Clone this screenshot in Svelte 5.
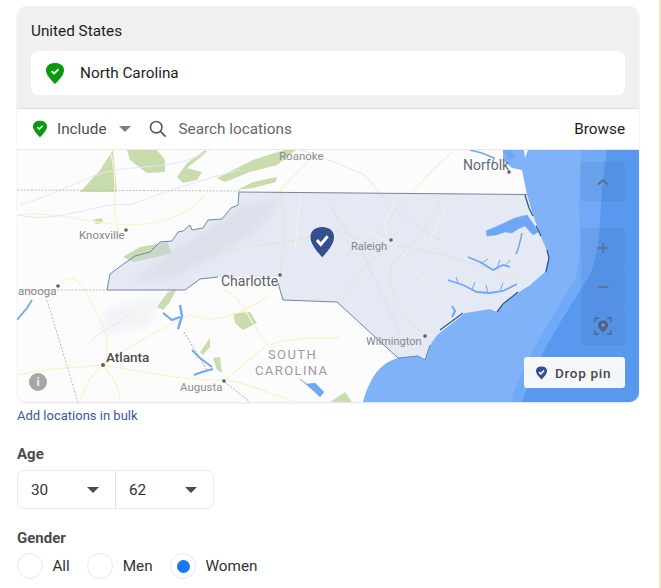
<script>
  const ages = ['30', '62'];
  const genders = [
    { label: 'All', on: false },
    { label: 'Men', on: false },
    { label: 'Women', on: true }
  ];
  const pin = 'M12 1C18.600 1 24 4.200 24 10.500C24 17 17 24 12 29C7 24 0 17 0 10.500C0 4.200 5.400 1 12 1Z';
  const nc = 'M239 192L527 194.500L533 215L540 235L549 255L545 272L530 285L510 298L497 312L490 309L465 313L437 335L430 345L425 360L418 356L398 358L337 302L283 300L278 283L280 277L218 277L200 279L185 290L107 290L110 274L122 265L135 256L150 252L160 242L172 241L178 232L183 231L190 225L192 230L203 228L208 220L222 219L231 208L238 205Z';
  const parks = [
    '80,192 100,170 113,150 117,192',
    '127,150 130,160 147,173 165,172 165,160 157,150',
    '177,177 187,163 205,150 207,152 187,168 202,172 197,180 183,183',
    '217,178 253,160 284,150 296,150 277,165 250,172 225,182',
    '237,190 253,182 277,177 276,182 253,188',
    '123,257 140,247 167,242 172,253 157,257 133,262',
    '157,307 167,293 177,288 170,302 163,310',
    '233,313 250,312 257,323 243,330 235,323',
    '200,352 210,338 210,347 203,355',
    '213,358 220,357 222,373 217,370',
    '92,220 102,218 103,223 96,224',
    '330,402 345,392 352,402'
  ];
  const roads = [
    'M17 215 C60 210 90 225 130 225 C160 225 190 215 205 195',
    'M110 150 C120 185 110 210 120 240',
    'M320 150 C300 170 290 180 280 190 C285 205 285 240 280 275',
    'M455 150 C430 170 415 190 405 200 C385 225 375 235 370 245 C345 230 330 225 300 240 C260 245 220 250 190 260',
    'M440 195 C435 230 400 250 392 265 C385 290 400 320 428 337',
    'M392 245 C360 265 350 290 340 300',
    'M392 245 C430 250 470 260 520 280',
    'M270 295 C240 315 215 325 190 315 C160 330 130 345 103 365',
    'M17 375 C60 365 85 368 103 365 C145 372 180 380 225 380',
    'M103 365 C115 345 100 320 90 300 C80 280 70 270 58 288',
    'M103 365 C85 380 85 390 80 402',
    'M103 365 C115 380 120 390 120 402',
    'M225 380 C250 360 260 350 268 345 C300 335 320 340 340 337',
    'M268 345 C250 325 245 300 225 290',
    'M225 380 C260 385 280 400 300 402'
  ];
  const rivers = [
    'M20 205 C50 195 60 190 85 180 C120 160 170 175 210 150',
    'M18 215 C60 225 100 200 130 205 C170 190 200 180 240 170',
    'M90 342 C100 330 120 325 130 312',
    'M300 150 C320 155 340 165 365 175 C385 200 395 215 440 240',
    'M330 205 C345 235 360 240 370 270 C380 290 390 310 400 335'
  ];
  const water = [
    'M486 231L500 225L515 218L527 215L532 222L538 232L533 235L525 226L518 229L512 233L505 232L496 235L487 236Z',
    'M503 150L510 150L516 158L508 160Z',
    'M300 379L307 384L315 383L320 388L324 392L320 397L316 393Z'
  ];
  const streams = [
    { d: 'M163 313L172 320L180 317', w: 2 },
    { d: 'M180 305L182 316L178 329', w: 2.400 },
    { d: 'M192 350L200 358L212 367', w: 1.800 },
    { d: 'M213 369L202 372L194 375', w: 2 },
    { d: 'M522 233C520 243 519 248 516 254', w: 1.500 },
    { d: 'M468 257L480 262L493 270L503 265L510 267', w: 1.800 },
    { d: 'M482 263L488 259M497 268L500 260M505 266L510 260', w: 1 },
    { d: 'M448 280L463 285L477 292L490 293L503 291L517 284', w: 1.800 },
    { d: 'M458 283L456 277M472 290L475 282M488 293L486 285M500 291L503 283', w: 1 },
    { d: 'M452 306L455 311L452 317', w: 2 },
    { d: 'M470 150L482 153L494 158L492 165', w: 1.500 },
    { d: 'M17 320L27 308L32 300', w: 1.800 }
  ];
</script>

<div class="page">
  <section class="card">
    <header class="selected">
      <div class="country">United States</div>
      <div class="region">
        <svg class="pin-lg" viewBox="0 0 24 30">
          <path d={pin} fill="#0b9a0f" />
          <path d="M7.500 12L10.800 15L16.500 9.500" fill="none" stroke="#fff" stroke-width="2.600" />
        </svg>
        <span>North Carolina</span>
      </div>
    </header>

    <div class="toolbar">
      <svg class="pin-sm" viewBox="0 0 24 30">
        <path d={pin} fill="#0b9a0f" />
        <path d="M7.500 12L10.800 15L16.500 9.500" fill="none" stroke="#fff" stroke-width="2.800" />
      </svg>
      <span class="include">Include</span>
      <span class="caret gray"></span>
      <svg class="search" viewBox="0 0 18 18">
        <circle cx="7.200" cy="7.200" r="5.700" fill="none" stroke="#55585c" stroke-width="1.600" />
        <path d="M11.400 11.400L16.600 16.600" stroke="#55585c" stroke-width="1.700" />
      </svg>
      <span class="placeholder">Search locations</span>
      <span class="browse">Browse</span>
    </div>

    <div class="map">
      <svg class="map-art" viewBox="17 150 622 252">
        <defs>
          <filter id="b1"><feGaussianBlur stdDeviation="0.500" /></filter>
          <filter id="b5"><feGaussianBlur stdDeviation="4" /></filter>
          <clipPath id="ncClip"><path d={nc} /></clipPath>
        </defs>
        <rect x="17" y="150" width="622" height="252" fill="#fcfcfd" />

        <g filter="url(#b5)" fill="#eff0f3" opacity=".7">
          <path d="M105 310L160 295L150 325L100 335Z" />
        </g>

        <g filter="url(#b1)">
          {#each parks as p}
            <polygon points={p} fill="#c9dcae" />
          {/each}
          <g fill="none" stroke="#faf3cf" stroke-width="1.300">
            {#each roads as d}<path {d} />{/each}
          </g>
          <g fill="none" stroke="#dfe8f5" stroke-width="1">
            {#each rivers as d}<path {d} />{/each}
          </g>
          <path d="M17 190L240 191" stroke="#bcbfc5" stroke-width="1" stroke-dasharray="2 1.500" />
          <path d="M19 290L107 290" stroke="#bcbfc5" stroke-width="1" stroke-dasharray="2 1.500" />
          <path d="M46 297L78 402" stroke="#b8bbc0" stroke-width="1" stroke-dasharray="2 1.500" />
          <path d="M184 332L207 370M222 380L250 402" stroke="#a9adb5" stroke-width="1" stroke-dasharray="2 1.500" fill="none" />
        </g>

        <path d="M503 150L503 160L512 168L522 170L527 194.500L533 215L540 235L549 255L545 272L530 285L510 298L497 312L490 309L465 313L437 335L430 345L425 360L418 356L398 358C385 362 372 370 363 402L639 402L639 150Z" fill="#80b2f7" />
        <path d="M524 150L528 150L525 158Z" fill="#fcfcfd" />
        <path d="M582 150C575 200 585 245 575 280C550 320 525 360 510 402L639 402L639 150Z" fill="#70a9f6" />
        <path d="M607 150C598 200 604 240 590 275C565 315 540 350 522 402L639 402L639 150Z" fill="#5898ef" />

        <path d={nc} fill="#c9d3e8" fill-opacity=".45" />
        <g clip-path="url(#ncClip)">
          <path d="M130 282L175 250L240 208L285 197L250 235L175 277Z" fill="#c8ced9" opacity=".32" filter="url(#b5)" />
          <g fill="none" stroke="#faf6dc" stroke-width="1" opacity=".8">
            <path d="M300 195L295 250M400 195C385 215 380 230 392 240M395 245L440 300M392 245L340 215M450 200L430 240" />
          </g>
        </g>

        <g fill="#6ea7f3" stroke="#6ea7f3" stroke-width=".5">
          {#each water as d}<path {d} />{/each}
        </g>
        <g fill="none" stroke="#6ea7f3">
          {#each streams as s}<path d={s.d} stroke-width={s.w} />{/each}
        </g>
        <path d="M525 195L529 208L533 216M536 226L541 236M547 250L549 258L546 272M518 292L503 304L497 312M463 313L440 330" fill="none" stroke="#36578f" stroke-width="1.300" />
        <path d="M239 192L527 194.500M238 205L231 208L222 219L208 220L203 228L192 230L190 225L183 231L178 232L172 241L160 242L150 252L135 256L122 265L110 274L107 290L185 290L200 279L218 277M278 283L283 300L337 302L398 358L418 356L425 360L430 345M239 192L238 205" fill="none" stroke="#7285a8" stroke-width="1" />

        <g fill="#5f6165">
          <circle cx="509" cy="172" r="1.800" /><circle cx="126" cy="230" r="1.800" />
          <circle cx="280" cy="275" r="1.800" /><circle cx="391" cy="240" r="1.800" />
          <circle cx="58" cy="286" r="1.800" /><circle cx="103" cy="365" r="2" />
          <circle cx="224" cy="381" r="1.800" /><circle cx="425" cy="336" r="1.800" />
        </g>

        <g class="labels">
          <text x="279" y="160" font-size="11.500" fill="#8b8d91">Roanoke</text>
          <text x="463" y="170" font-size="14" fill="#66696e">Norfolk</text>
          <text x="79" y="239" font-size="11.500" fill="#85878b">Knoxville</text>
          <text x="351" y="250" font-size="11" fill="#85878b">Raleigh</text>
          <text x="221" y="286" font-size="14" fill="#5d6064">Charlotte</text>
          <text x="18" y="295" font-size="11.500" fill="#85878b">anooga</text>
          <text x="106" y="362" font-size="13.500" font-weight="500" fill="#4a4c50">Atlanta</text>
          <text x="268" y="359" font-size="13" letter-spacing="1.400" fill="#9a9ca1">SOUTH</text>
          <text x="255" y="375" font-size="13" letter-spacing="1.400" fill="#9a9ca1">CAROLINA</text>
          <text x="180" y="391" font-size="11.500" fill="#8b8d91">Augusta</text>
          <text x="366" y="345" font-size="11" fill="#85878b">Wilmington</text>
        </g>

        <g transform="translate(310.500 226) scale(.98 1.080)">
          <path d={pin} fill="#344f8d" />
          <path d="M6.500 13L10.500 17L17.500 9.500" fill="none" stroke="#fff" stroke-width="3" />
        </g>
      </svg>

      <div class="controls">
        <button class="ctl up" aria-label="Collapse">
          <svg viewBox="0 0 14 8"><path d="M2 6.500L7 2L12 6.500" fill="none" stroke="#5b6f8c" stroke-width="1.800" /></svg>
        </button>
        <button class="ctl" aria-label="Zoom in">
          <svg viewBox="0 0 14 14"><path d="M7 1.500V12.500M1.500 7H12.500" stroke="#5b6f8c" stroke-width="1.500" /></svg>
        </button>
        <button class="ctl" aria-label="Zoom out">
          <svg viewBox="0 0 14 14"><path d="M1.500 7H12.500" stroke="#5b6f8c" stroke-width="1.500" /></svg>
        </button>
        <button class="ctl" aria-label="Locate">
          <svg viewBox="0 0 18 18">
            <path d="M1 5V1H5M13 1H17V5M17 13V17H13M5 17H1V13" fill="none" stroke="#4f6482" stroke-width="1.300" />
            <path d="M9 3.500C12 3.500 14 5.500 14 8.200C14 11 11 13.500 9 15.500C7 13.500 4 11 4 8.200C4 5.500 6 3.500 9 3.500Z" fill="#4f6482" />
            <circle cx="9" cy="8" r="1.800" fill="#6aa0ea" />
          </svg>
        </button>
      </div>

      <button class="drop">
        <svg viewBox="0 0 24 30"><path d={pin} fill="#344f8d" /><path d="M6.500 13L10.500 17L17.500 9.500" fill="none" stroke="#fff" stroke-width="3.400" /></svg>
        Drop pin
      </button>

      <div class="info">i</div>
    </div>
  </section>

  <div class="bulk">Add locations in bulk</div>

  <div class="label age-label">Age</div>
  <div class="ages">
    {#each ages as age}
      <div class="age"><span>{age}</span><i class="caret dark"></i></div>
    {/each}
  </div>

  <div class="label gender-label">Gender</div>
  <div class="genders">
    {#each genders as g}
      <div class="gender">
        <span class="radio" class:on={g.on}></span>
        <span>{g.label}</span>
      </div>
    {/each}
  </div>
</div>

<style>
  :global(body) {
    margin: 0;
    background: #fff;
  }
  .page {
    box-sizing: border-box;
    width: 661px;
    height: 588px;
    padding: 6px 20px 0 17px;
    overflow: hidden;
    font-family: Roboto, "Liberation Sans", sans-serif;
    color: #1c1e21;
    border-right: 2px solid #f3e9bd;
  }
  .card {
    width: 622px;
    border-radius: 10px;
    overflow: hidden;
    box-shadow: 0 1px 2px rgba(0, 0, 0, 0.12);
  }
  .selected {
    height: 103px;
    box-sizing: border-box;
    background: #f0f0f0;
    padding: 15px 14px 0;
    border-bottom: 1px solid #dcdcdc;
  }
  .country {
    font-size: 15.300px;
    line-height: 20px;
  }
  .region {
    margin-top: 10px;
    height: 44px;
    background: #fff;
    border-radius: 8px;
    display: flex;
    align-items: center;
    padding-left: 15px;
    font-size: 15.300px;
  }
  .pin-lg {
    width: 18px;
    height: 23px;
    margin-right: 16px;
  }
  .toolbar {
    height: 41px;
    box-sizing: border-box;
    background: #fff;
    display: flex;
    align-items: center;
    padding: 0 14px 0 16px;
    font-size: 15.300px;
    border-bottom: 1px solid #e8e8e8;
  }
  .pin-sm {
    width: 14px;
    height: 18px;
    margin-right: 10px;
  }
  .include {
    color: #4b4f56;
    margin-right: 12px;
  }
  .caret {
    display: inline-block;
    width: 0;
    height: 0;
    border-left: 6px solid transparent;
    border-right: 6px solid transparent;
    border-top: 6px solid #7d8084;
  }
  .caret.dark {
    border-top-color: #4b4b4b;
  }
  .search {
    width: 18px;
    height: 18px;
    margin: 0 12px 0 18px;
  }
  .placeholder {
    color: #65676b;
  }
  .browse {
    margin-left: auto;
    color: #1c1e21;
  }
  .map {
    position: relative;
    height: 252px;
    overflow: hidden;
  }
  .map-art {
    display: block;
    width: 622px;
    height: 252px;
  }
  .labels text {
    font-family: Roboto, "Liberation Sans", sans-serif;
  }
  .controls {
    position: absolute;
    top: 12px;
    right: 14px;
    width: 44px;
    display: flex;
    flex-direction: column;
  }
  .ctl {
    width: 44px;
    height: 39px;
    padding: 0;
    border: 0;
    display: flex;
    align-items: center;
    justify-content: center;
    background: rgba(50, 90, 150, 0.1);
    border-radius: 4px;
  }
  .ctl.up {
    margin-bottom: 27px;
  }
  .ctl svg {
    width: 14px;
    height: 14px;
  }
  .ctl.up svg {
    height: 8px;
  }
  .ctl:last-child svg {
    width: 18px;
    height: 18px;
  }
  .drop {
    position: absolute;
    right: 14px;
    bottom: 14px;
    width: 101px;
    height: 31px;
    padding: 0 0 0 12px;
    border: 0;
    border-radius: 3px;
    background: #f5f6f7;
    display: flex;
    align-items: center;
    gap: 8px;
    font: 500 13.500px Roboto, "Liberation Sans", sans-serif;
    letter-spacing: 0.700px;
    color: #444950;
  }
  .drop svg {
    width: 11px;
    height: 14px;
  }
  .info {
    position: absolute;
    left: 12px;
    top: 223px;
    width: 18px;
    height: 18px;
    border-radius: 50%;
    background: #a6a6a9;
    color: #ececec;
    font: 700 13px/18px "Liberation Serif", serif;
    text-align: center;
  }
  .bulk {
    margin-top: 6px;
    font-size: 13px;
    line-height: 16px;
    color: #3b5998;
  }
  .label {
    font-size: 15px;
    font-weight: 700;
    line-height: 18px;
    color: #4b4b4b;
  }
  .age-label {
    margin-top: 21px;
  }
  .ages {
    margin-top: 7px;
    display: flex;
    width: 197px;
    height: 39px;
    box-sizing: border-box;
    border: 1px solid #ebebeb;
    border-radius: 7px;
  }
  .age {
    flex: 1;
    display: flex;
    align-items: center;
    justify-content: space-between;
    padding: 0 16px 0 13px;
    font-size: 15.300px;
    color: #333;
  }
  .age + .age {
    border-left: 1px solid #e2e2e2;
  }
  .gender-label {
    margin-top: 20px;
  }
  .genders {
    margin-top: 6px;
    display: flex;
    gap: 17.500px;
  }
  .gender {
    display: flex;
    align-items: center;
    gap: 9.400px;
    font-size: 15.300px;
    color: #333;
  }
  .radio {
    box-sizing: border-box;
    width: 26px;
    height: 26px;
    border: 1px solid #e8e8e8;
    border-radius: 50%;
    display: flex;
    align-items: center;
    justify-content: center;
  }
  .radio.on::after {
    content: "";
    width: 13px;
    height: 13px;
    border-radius: 50%;
    background: #1877f2;
  }
</style>
